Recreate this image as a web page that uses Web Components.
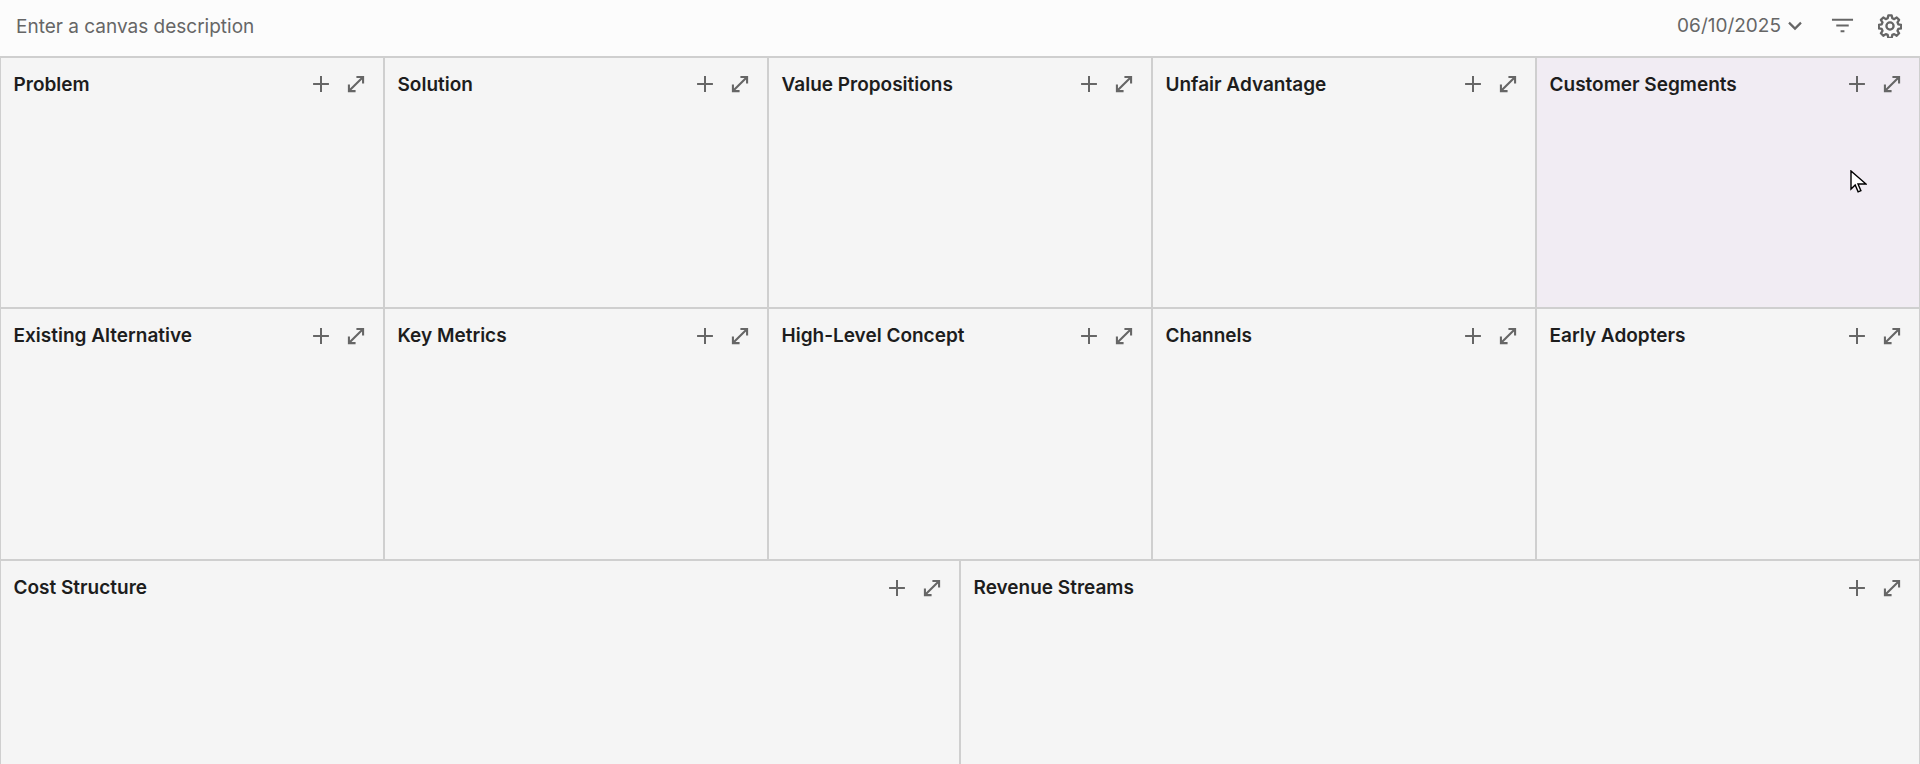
<!DOCTYPE html>
<html lang="en">
<head>
<meta charset="utf-8">
<title>Canvas</title>
<style>
  html, body { margin: 0; height: 100%; overflow: hidden; background: #f5f5f5; }
  body { font-family: Inter, "Noto Sans", sans-serif; color: #1d1d1d; }
</style>
</head>
<body>
<canvas-page></canvas-page>

<script>
class CanvasIcon extends HTMLElement {
  static paths = {
    plus: '<path d="M12 2.5v19M2.5 12h19" stroke-width="2.4"/>',
    expand: '<path d="M12.5 3.5h8V11.5M20.5 3.5 3.5 20.5M3.5 12.5v8h8" stroke-width="2.5"/>',
    chevron: '<path d="M4 7.5l8 8 8-8" stroke-width="2.9"/>',
    filter: '<path d="M1 6h22M5.5 12h13M10 18h4" stroke-width="2.3"/>',
    gear: '<path d="M10.3 2.6h3.4l.6 2.9 1.9.8 2.5-1.6 2.4 2.4-1.6 2.5.8 1.9 2.9.6v3.4l-2.9.6-.8 1.9 1.6 2.5-2.4 2.4-2.5-1.6-1.9.8-.6 2.9h-3.4l-.6-2.9-1.9-.8-2.5 1.6-2.4-2.4 1.6-2.5-.8-1.9-2.9-.6v-3.4l2.9-.6.8-1.9-1.6-2.5 2.4-2.4 2.5 1.6 1.9-.8z" transform="translate(0 -1.2)" stroke-width="2.3" stroke-linejoin="round"/><circle cx="12" cy="12" r="3.6" stroke-width="2.3"/>'
  };

  connectedCallback() {
    if (this.shadowRoot) {
      return;
    }
    const shadow = this.attachShadow({ mode: "open" });
    const name = this.getAttribute("name");
    const size = this.getAttribute("size") || 20;
    shadow.innerHTML = `
      <style>
        :host { display: inline-flex; color: var(--icon-color, #666); }
        svg { display: block; fill: none; stroke: currentColor; }
      </style>
      <svg width="${size}" height="${size}" viewBox="0 0 24 24" aria-hidden="true">${CanvasIcon.paths[name]}</svg>
    `;
  }
}
customElements.define("canvas-icon", CanvasIcon);

class CanvasHeader extends HTMLElement {
  connectedCallback() {
    if (this.shadowRoot) {
      return;
    }
    const shadow = this.attachShadow({ mode: "open" });
    shadow.innerHTML = `
      <style>
        :host {
          display: flex;
          align-items: center;
          justify-content: space-between;
          box-sizing: border-box;
          height: 56px;
          padding: 0 16px 5px;
          background: #fcfcfc;
        }
        .description { font-size: 19px; color: #666; margin-top: 1px; }
        .tools { display: flex; align-items: center; margin-right: 2px; }
        .date { font-size: 19px; color: #666; margin-right: 5px; }
        .filter { margin-left: 27px; }
        .gear { margin-left: 24px; }
      </style>
      <span class="description">Enter a canvas description</span>
      <div class="tools">
        <span class="date">06/10/2025</span>
        <canvas-icon name="chevron" size="18"></canvas-icon>
        <canvas-icon class="filter" name="filter" size="23"></canvas-icon>
        <canvas-icon class="gear" name="gear" size="24"></canvas-icon>
      </div>
    `;
  }
}
customElements.define("canvas-header", CanvasHeader);

class CanvasCell extends HTMLElement {
  connectedCallback() {
    if (this.shadowRoot) {
      return;
    }
    const shadow = this.attachShadow({ mode: "open" });
    shadow.innerHTML = `
      <style>
        :host {
          display: block;
          box-sizing: border-box;
          min-width: 0;
          padding: 13px 17px 0 12.5px;
          background: #f5f5f5;
          border: 1px solid #cfcfcf;
        }
        :host([lower]) { padding-top: 14px; }
        :host([hover]) { background: #f1ecf3; }
        .head { display: flex; align-items: center; height: 26px; }
        .title { flex: 1; font-size: 19px; font-weight: 600; color: #1d1d1d; }
        :host([lower]) .title { margin-bottom: 1px; }
        .actions { display: flex; align-items: center; gap: 15px; }
      </style>
      <div class="head">
        <span class="title"><slot></slot></span>
        <div class="actions">
          <canvas-icon name="plus"></canvas-icon>
          <canvas-icon name="expand"></canvas-icon>
        </div>
      </div>
    `;
  }
}
customElements.define("canvas-cell", CanvasCell);

class CanvasPage extends HTMLElement {
  connectedCallback() {
    if (this.shadowRoot) {
      return;
    }
    const shadow = this.attachShadow({ mode: "open" });
    shadow.innerHTML = `
      <style>
        :host { display: block; position: relative; height: 764px; overflow: hidden; }
        .grid {
          display: grid;
          grid-template-columns: repeat(10, 1fr);
          grid-template-rows: 251px 252px 252px;
          border-top: 1px solid #cfcfcf;
        }
        canvas-cell { grid-column: span 2; }
        canvas-cell.wide { grid-column: span 5; }
        .cursor { position: absolute; left: 1850px; top: 170px; }
      </style>
      <canvas-header></canvas-header>
      <div class="grid">
        <canvas-cell>Problem</canvas-cell>
        <canvas-cell>Solution</canvas-cell>
        <canvas-cell>Value Propositions</canvas-cell>
        <canvas-cell>Unfair Advantage</canvas-cell>
        <canvas-cell hover>Customer Segments</canvas-cell>
        <canvas-cell lower>Existing Alternative</canvas-cell>
        <canvas-cell lower>Key Metrics</canvas-cell>
        <canvas-cell lower>High-Level Concept</canvas-cell>
        <canvas-cell lower>Channels</canvas-cell>
        <canvas-cell lower>Early Adopters</canvas-cell>
        <canvas-cell lower class="wide">Cost Structure</canvas-cell>
        <canvas-cell lower class="wide">Revenue Streams</canvas-cell>
      </div>
      <svg class="cursor" width="17" height="25" viewBox="0 0 17 25" aria-hidden="true">
        <path d="M1 1v18l4.2-4 2.9 6.8 2.8-1.2-2.9-6.6H16z" fill="#fff" stroke="#000" stroke-width="1.4" stroke-linejoin="miter"/>
      </svg>
    `;
  }
}
customElements.define("canvas-page", CanvasPage);
</script>
</body>
</html>
